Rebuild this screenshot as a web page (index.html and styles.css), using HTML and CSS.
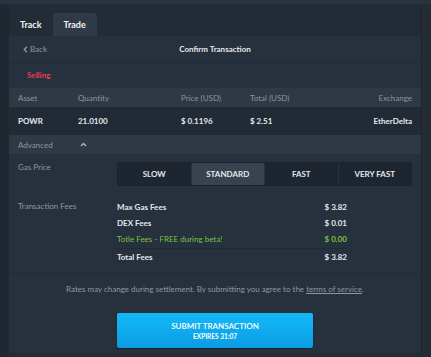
FILE: index.html
```html
<!DOCTYPE html>
<html lang="en">

<head>
    <meta charset="UTF-8">
    <title>Confirm Transaction</title>
    <link rel="stylesheet" href="styles.css">
</head>

<body>
    <div class="topbar"></div>
    <div class="main">
        <div class="sidebar"></div>
        <div class="content">
            <div class="tabs">
                <div class="tab">Track</div>
                <div class="tab active">Trade</div>
            </div>

            <div class="panel">
                <div class="panel-head">
                    <span class="back">
                        <svg width="5" height="7" viewBox="0 0 5 7">
                            <path d="M4 0.8 L1.3 3.5 L4 6.2" fill="none" stroke="#8d97a2" stroke-width="1.4" />
                        </svg>
                        Back
                    </span>
                    <span class="title">Confirm Transaction</span>
                    <span class="spacer"></span>
                </div>

                <div class="side-row">Selling</div>

                <div class="grid grid-head">
                    <span>Asset</span>
                    <span>Quantity</span>
                    <span>Price (USD)</span>
                    <span>Total (USD)</span>
                    <span class="right">Exchange</span>
                </div>
                <div class="grid grid-row">
                    <span>POWR</span>
                    <span>21.0100</span>
                    <span>$ 0.1196</span>
                    <span>$ 2.51</span>
                    <span class="right">EtherDelta</span>
                </div>

                <div class="advanced">
                    Advanced
                    <svg class="caret" width="7" height="5" viewBox="0 0 7 5">
                        <path d="M1 4 L3.5 1.5 L6 4" fill="none" stroke="#aeb6bf" stroke-width="1.3" />
                    </svg>
                </div>

                <div class="section gas">
                    <div class="label">Gas Price</div>
                    <div class="speeds">
                        <div class="speed">SLOW</div>
                        <div class="speed selected">STANDARD</div>
                        <div class="speed">FAST</div>
                        <div class="speed">VERY FAST</div>
                    </div>
                </div>

                <div class="section fees">
                    <div class="label">Transaction Fees</div>
                    <div class="fee-list">
                        <div class="fee"><span>Max Gas Fees</span><span>$ 3.82</span></div>
                        <div class="fee"><span>DEX Fees</span><span>$ 0.01</span></div>
                        <div class="fee green"><span>Totle Fees - FREE during beta!</span><span>$ 0.00</span></div>
                        <div class="fee total"><span>Total Fees</span><span>$ 3.82</span></div>
                    </div>
                </div>

                <div class="footer">
                    <p class="note">Rates may change during settlement. By submitting you agree to the <u>terms of service</u>.</p>
                    <button class="submit">
                        <span class="submit-main">SUBMIT TRANSACTION</span>
                        <span class="submit-sub">EXPIRES 31:07</span>
                    </button>
                </div>
            </div>
        </div>
        <div class="rightbar"></div>
    </div>
</body>

</html>
```

FILE: styles.css
```css
body {
    margin: 0;
    background-color: #1f2731;
    font-family: Lato, "Open Sans", sans-serif;
    font-size: 8px;
    color: #e4e8ec;
}

.topbar {
    height: 4px;
    background-color: #2a3440;
}

.main {
    display: flex;
    height: 353px;
}

.sidebar {
    width: 9px;
    background-color: #1f2731;
}

.content {
    width: 413px;
    background-color: #222b36;
}

.rightbar {
    width: 9px;
    background-color: #232c37;
    border-left: 1px solid #1e252e;
}

.tabs {
    display: flex;
    align-items: flex-end;
    height: 32px;
}

.tab {
    height: 23px;
    line-height: 23px;
    padding: 0 11px;
    font-size: 9px;
    font-weight: bold;
    color: #f1f3f5;
    border-radius: 3px 3px 0 0;
}

.tab.active {
    background-color: #2f3a46;
}

.panel {
    background-color: #27313e;
    height: 317px;
}

.panel-head {
    display: flex;
    align-items: center;
    height: 26px;
    padding: 0 14px;
    border-bottom: 1px solid #222b36;
}

.back {
    flex: 1;
    display: flex;
    align-items: center;
    gap: 2px;
    color: #8d97a2;
}

.title {
    font-weight: bold;
    color: #e4e8ec;
}

.spacer {
    flex: 1;
}

.side-row {
    height: 25px;
    line-height: 25px;
    padding-left: 18px;
    color: #ec3a55;
    font-weight: bold;
}

.grid {
    display: grid;
    grid-template-columns: 60px 103px 69px 1fr auto;
    align-items: center;
    padding: 0 9px;
}

.grid-head {
    height: 19px;
    background-color: #2e3944;
    color: #8b96a1;
}

.grid-row {
    height: 28px;
    background-color: #212a35;
    font-weight: bold;
}

.right {
    text-align: right;
}

.advanced {
    display: flex;
    align-items: center;
    gap: 27px;
    height: 19px;
    padding-left: 9px;
    background-color: #2e3944;
    color: #8b96a1;
}

.section {
    display: flex;
    padding: 0 9px;
}

.label {
    width: 99px;
    flex-shrink: 0;
    color: #8b96a1;
}

.gas {
    padding-top: 8px;
}

.speeds {
    display: flex;
    flex: 1;
    border: 1px solid #1b222b;
    border-radius: 2px;
    background-color: #1d2530;
}

.speed {
    flex: 1;
    height: 22px;
    line-height: 22px;
    text-align: center;
    font-weight: bold;
    border-left: 1px solid #2a3440;
}

.speed:first-child {
    border-left: none;
}

.speed.selected {
    background-color: #38434f;
}

.fees {
    padding-top: 14px;
}

.fees .label {
    padding-top: 1px;
}

.fee-list {
    width: 230px;
}

.fee {
    display: flex;
    justify-content: space-between;
    height: 16px;
    line-height: 14px;
    font-weight: bold;
}

.fee.green {
    color: #7ac043;
    font-weight: normal;
    border-bottom: 1px solid #212a35;
}

.fee.green span:last-child {
    font-weight: bold;
}

.fee.total {
    line-height: 16px;
}

.footer {
    margin-top: 8px;
    border-top: 1px solid #222b36;
    text-align: center;
}

.note {
    margin: 10px 0 0;
    color: #8d97a2;
    font-size: 8px;
}

.submit {
    display: inline-flex;
    flex-direction: column;
    justify-content: center;
    align-items: center;
    width: 196px;
    height: 35px;
    margin-top: 19px;
    border: none;
    border-radius: 2px;
    background: linear-gradient(#14b9f8, #0a9ce3);
    color: #ffffff;
    font-family: Lato, sans-serif;
    box-shadow: 0 1px 2px rgba(0, 0, 0, 0.4);
}

.submit-main {
    font-size: 8px;
    font-weight: 600;
}

.submit-sub {
    margin-top: 2px;
    font-size: 6.5px;
    font-weight: bold;
}
```
